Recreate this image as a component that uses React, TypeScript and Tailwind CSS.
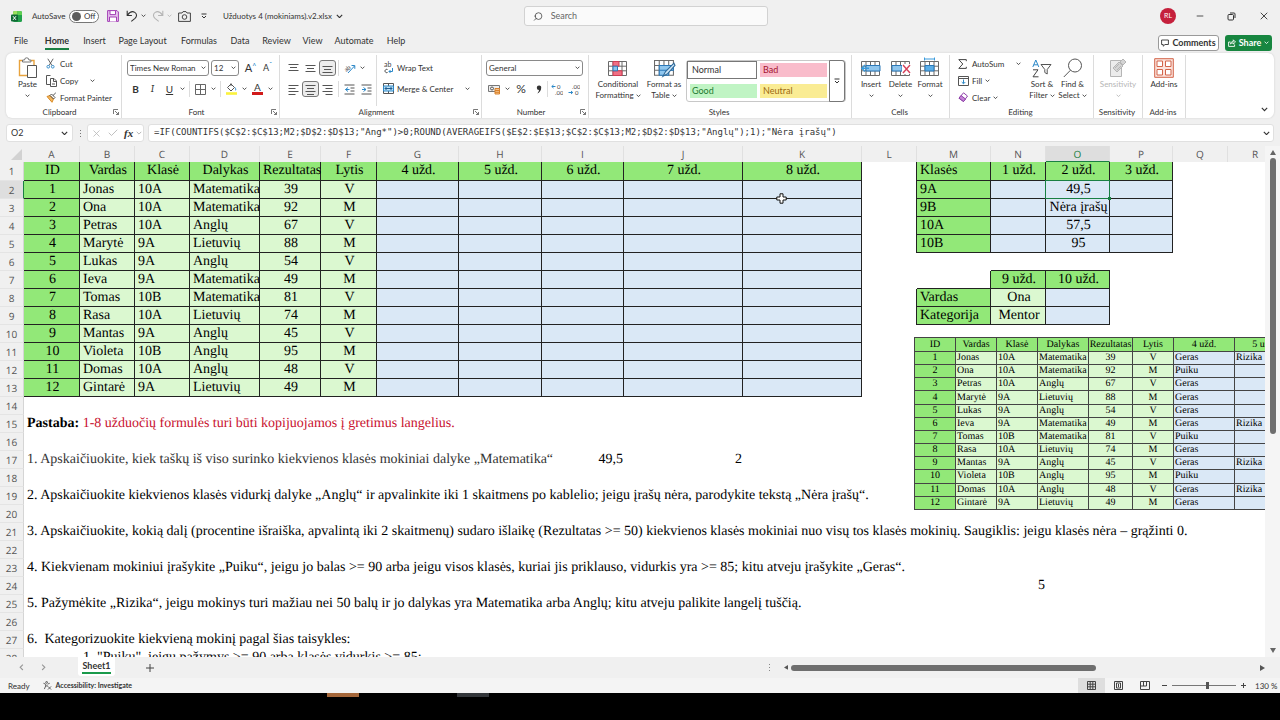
import React from "react";
import { Search, X, Minus, Check } from "lucide-react";

type Kind = "head" | "light" | "blue" | "plain";
type Cell = { text?: React.ReactNode; kind?: Kind; align?: string; edge?: string };

const columns = [
  { name: "A", width: "w-[56px]" },
  { name: "B", width: "w-[55px]" },
  { name: "C", width: "w-[55px]" },
  { name: "D", width: "w-[70px]" },
  { name: "E", width: "w-[61px]" },
  { name: "F", width: "w-[56px]" },
  { name: "G", width: "w-[82px]" },
  { name: "H", width: "w-[83px]" },
  { name: "I", width: "w-[82px]" },
  { name: "J", width: "w-[119px]" },
  { name: "K", width: "w-[119px]" },
  { name: "L", width: "w-[55px]" },
  { name: "M", width: "w-[74px]" },
  { name: "N", width: "w-[55px]" },
  { name: "O", width: "w-[64px]" },
  { name: "P", width: "w-[63px]" },
  { name: "Q", width: "w-[55px]" },
  { name: "R", width: "w-[55px]" },
];

const headers = ["ID", "Vardas", "Klasė", "Dalykas", "Rezultatas", "Lytis"];

const students = [
  ["1", "Jonas", "10A", "Matematika", "39", "V", "Geras", "Rizika"],
  ["2", "Ona", "10A", "Matematika", "92", "M", "Puiku", ""],
  ["3", "Petras", "10A", "Anglų", "67", "V", "Geras", ""],
  ["4", "Marytė", "9A", "Lietuvių", "88", "M", "Geras", ""],
  ["5", "Lukas", "9A", "Anglų", "54", "V", "Geras", ""],
  ["6", "Ieva", "9A", "Matematika", "49", "M", "Geras", "Rizika"],
  ["7", "Tomas", "10B", "Matematika", "81", "V", "Puiku", ""],
  ["8", "Rasa", "10A", "Lietuvių", "74", "M", "Geras", ""],
  ["9", "Mantas", "9A", "Anglų", "45", "V", "Geras", "Rizika"],
  ["10", "Violeta", "10B", "Anglų", "95", "M", "Puiku", ""],
  ["11", "Domas", "10A", "Anglų", "48", "V", "Geras", "Rizika"],
  ["12", "Gintarė", "9A", "Lietuvių", "49", "M", "Geras", ""],
];

const cells: Record<string, Cell> = {};

[...headers, "4 užd.", "5 užd.", "6 užd.", "7 užd.", "8 užd."].forEach((text, i) => {
  cells[columns[i].name + 1] = { text, kind: "head", align: "text-center" };
});
students.forEach((student, r) => {
  const row = r + 2;
  student.slice(0, 6).forEach((text, i) => {
    cells[columns[i].name + row] = {
      text,
      kind: i === 0 ? "head" : "light",
      align: i === 0 || i > 3 ? "text-center" : "text-left",
    };
  });
  "GHIJK".split("").forEach((c) => (cells[c + row] = { kind: "blue" }));
});

const summary = [
  ["Klasės", "1 užd.", "2 užd.", "3 užd."],
  ["9A", "", "49,5", ""],
  ["9B", "", "Nėra įrašų", ""],
  ["10A", "", "57,5", ""],
  ["10B", "", "95", ""],
];
summary.forEach((line, r) => {
  cells["L" + (r + 1)] = { edge: "border-r border-[#222]" };
  line.forEach((text, i) => {
    cells["MNOP"[i] + (r + 1)] = {
      text,
      kind: i === 0 || r === 0 ? "head" : "blue",
      align: i === 0 ? "text-left" : "text-center",
    };
  });
});

const notes: [string, React.ReactNode][] = [
  [
    "A15",
    <>
      <b>Pastaba:</b> <span className="text-[#c8102e]">1-8 užduočių formulės turi būti kopijuojamos į gretimus langelius.</span>
    </>,
  ],
  ["A17", <span className="text-[#333]">1. Apskaičiuokite, kiek taškų iš viso surinko kiekvienos klasės mokiniai dalyke „Matematika“</span>],
  ["A19", "2. Apskaičiuokite kiekvienos klasės vidurkį dalyke „Anglų“ ir apvalinkite iki 1 skaitmens po kablelio; jeigu įrašų nėra, parodykite tekstą „Nėra įrašų“."],
  ["A21", "3. Apskaičiuokite, kokią dalį (procentine išraiška, apvalintą iki 2 skaitmenų) sudaro išlaikę (Rezultatas >= 50) kiekvienos klasės mokiniai nuo visų tos klasės mokinių. Saugiklis: jeigu klasės nėra – grąžinti 0."],
  ["A23", "4. Kiekvienam mokiniui įrašykite „Puiku“, jeigu jo balas >= 90 arba jeigu visos klasės, kuriai jis priklauso, vidurkis yra >= 85; kitu atveju įrašykite „Geras“."],
  ["A25", "5. Pažymėkite „Rizika“, jeigu mokinys turi mažiau nei 50 balų ir jo dalykas yra Matematika arba Anglų; kitu atveju palikite langelį tuščią."],
  ["A27", <span className="whitespace-pre">{"6.  Kategorizuokite kiekvieną mokinį pagal šias taisykles:"}</span>],
  ["B28", '1. "Puiku", jeigu pažymys >= 90 arba klasės vidurkis >= 85;'],
];
notes.forEach(([key, text]) => (cells[key] = { text }));

Object.assign(cells, {
  M6: {},
  N6: { edge: "border-b border-[#222]" },
  O6: { edge: "border-b border-[#222]" },
  M7: { edge: "border-r border-b border-[#222]" },
  N7: { text: "9 užd.", kind: "head", align: "text-center" },
  O7: { text: "10 užd.", kind: "head", align: "text-center" },
  L8: { edge: "border-r border-[#222]" },
  M8: { text: "Vardas", kind: "head" },
  N8: { text: "Ona", kind: "light", align: "text-center" },
  O8: { kind: "blue" },
  L9: { edge: "border-r border-[#222]" },
  M9: { text: "Kategorija", kind: "head" },
  N9: { text: "Mentor", kind: "light", align: "text-center" },
  O9: { kind: "blue" },
  I17: { text: "49,5", align: "text-right" },
  J17: { text: "2", align: "text-right" },
  N24: { text: "5", align: "text-right" },
});

const fills: Record<Kind, string> = {
  head: "bg-[#92e878] border-r border-b border-[#222]",
  light: "bg-[#dbf8d0] border-r border-b border-[#222]",
  blue: "bg-[#dae8f6] border-r border-b border-[#222]",
  plain: "",
};

const Chevron = ({ className = "w-[5px]" }: { className?: string }) => (
  <svg viewBox="0 0 6 4" className={`shrink-0 ${className}`} fill="none" stroke="currentColor" strokeWidth="1">
    <path d="M.7.8 3 3.1 5.3.8" />
  </svg>
);

const Sep = ({ className = "" }: { className?: string }) => <span className={`w-px self-stretch bg-[#dcdcdc] ${className}`} />;

const Lines = ({ d }: { d: string }) => (
  <svg viewBox="0 0 11 11" className="w-[11px]" fill="none" stroke="#555">
    <path d={d} />
  </svg>
);

const UndoIcon = ({ className = "" }: { className?: string }) => (
  <svg viewBox="0 0 12 12" className={`w-[12px] ${className}`} fill="none" stroke="currentColor" strokeWidth="1.1">
    <path d="M1.200.8v4.700h4.700M1.500 5.200C3.500 2.300 6.500 1 8.800 2.400c2.600 1.800 1.900 4.400.2 5.900L5.300 11.400" />
  </svg>
);

const PasteIcon = () => (
  <svg viewBox="0 0 20 22" className="w-[20px]" fill="none">
    <path d="M4 3.5H1.5v15H9M13 3.5h3V8" stroke="#e8a33d" strokeWidth="1.4" />
    <path d="M4.5 5V3h2a2.2 2.2 0 0 1 4.400 0h2v2z" fill="#fff" stroke="#777" />
    <path d="M9.5 8.5h9v12h-9z" fill="#fff" stroke="#555" />
  </svg>
);

const CutIcon = () => (
  <svg viewBox="0 0 10 12" className="w-[9px]" fill="none">
    <path d="M2 .8 6.7 8.4M8 .8 3.3 8.4" stroke="#555" />
    <circle cx="2.5" cy="9.7" r="1.5" stroke="#2b88c8" />
    <circle cx="7.5" cy="9.7" r="1.5" stroke="#2b88c8" />
  </svg>
);

const CopyIcon = () => (
  <svg viewBox="0 0 11 12" className="w-[11px]" fill="#fff" stroke="#555">
    <path d="M6.5 9.5h-6v-9h4" />
    <path d="M4.5 3.5H8L10.500 6v5.500h-6z" />
    <path d="M7.500 3.500v3h3M6 9h3" fill="none" />
  </svg>
);

const BrushIcon = () => (
  <svg viewBox="0 0 11 11" className="w-[11px]" fill="none">
    <path d="M1 4.500 4 3.500 7.500 7 6 10.300z" fill="#f2b65e" stroke="#d98a26" />
    <path d="M4 3.500 5.500 2l3.500 3.500L7.500 7zM7 3.500 9.800.8" stroke="#555" />
  </svg>
);

const Grid = ({ className = "w-[20px]", children }: { className?: string; children?: React.ReactNode }) => (
  <svg viewBox="0 0 20 17" className={`overflow-visible ${className}`} fill="none">
    <path d="M.5 1.500h18v14H.5zM5 1.500v14M9.500 1.500v14M14 1.500v14M.5 6.200h18M.5 10.800h18" stroke="#6a6a6a" />
    {children}
  </svg>
);

type GroupProps = { label: string; width: string; launcher?: boolean; children: React.ReactNode };

const Group = ({ label, width, launcher, children }: GroupProps) => (
  <section aria-label={label} className={`flex shrink-0 flex-col pt-0.5 ${width}`}>
    <div className="flex flex-1 border-r border-[#dcdcdc]">{children}</div>
    <div className="flex h-3 items-center border-r border-[#dcdcdc] pr-0.5">
      <span className="flex-1 text-center">{label}</span>
      {launcher && (
        <button aria-label={`${label} settings`}>
          <svg viewBox="0 0 6 6" className="w-[6px]" fill="none" stroke="#555" strokeWidth=".8">
            <path d="M.5 5V.5H5M2 2l3.500 3.500M5.500 3v2.500H3" />
          </svg>
        </button>
      )}
    </div>
  </section>
);

type BigProps = { icon: React.ReactNode; lines: string[]; width: string; muted?: boolean; arrow?: boolean };

// large ribbon button: icon above one or two lines of text
const BigButton = ({ icon, lines, width, muted, arrow = true }: BigProps) => (
  <button className={`flex flex-col items-center pt-[2px] leading-[11px] whitespace-nowrap ${width} ${muted ? "text-[#b5b5b5]" : ""}`}>
    <span className="flex h-[22px] items-center">{icon}</span>
    <span>{lines[0]}</span>
    <span className="flex h-[11px] items-center gap-0.5">
      {lines[1]}
      {arrow && <Chevron />}
    </span>
  </button>
);

const SmallButton = ({ icon, label, children }: { icon: React.ReactNode; label: string; children?: React.ReactNode }) => (
  <button className="flex h-[17px] items-center whitespace-nowrap">
    <span className="flex w-[14px] shrink-0">{icon}</span>
    {label}
    {children}
  </button>
);

const Pick = ({ label, value, width }: { label: string; value: string; width: string }) => (
  <span className={`relative ${width}`}>
    <select aria-label={label} className="h-4 w-full appearance-none rounded-[3px] border border-[#8a8a8a] bg-white pl-[2px]">
      <option>{value}</option>
    </select>
    <Chevron className="pointer-events-none absolute top-1.5 right-[3px] w-[5px]" />
  </span>
);

const tool = "flex h-4 w-[17px] shrink-0 items-center justify-center";
const pressed = "rounded-[3px] border border-[#777] bg-[#ececec]";
const drop = "flex w-[9px] shrink-0 items-center justify-center";

const tabs = [
  { name: "File", width: "w-[30px]" },
  { name: "Home", width: "w-[42px]" },
  { name: "Insert", width: "w-[33px]" },
  { name: "Page Layout", width: "w-[63px]" },
  { name: "Formulas", width: "w-[50px]" },
  { name: "Data", width: "w-[32px]" },
  { name: "Review", width: "w-[41px]" },
  { name: "View", width: "w-[31px]" },
  { name: "Automate", width: "w-[52px]" },
  { name: "Help", width: "w-[32px]" },
];

const TitleBar = () => (
  <header className="flex h-8 items-center pl-[11px] whitespace-nowrap">
    <div className="flex flex-1 items-center">
      <svg viewBox="0 0 11 11" className="w-[11px]">
        <rect x="2" width="9" height="11" rx="1.5" fill="#21a14b" />
        <path d="M2 1.500A1.500 1.500 0 0 1 3.500 0H6.500v4H2z" fill="#9be05e" />
        <path d="M6.500 0h3A1.500 1.500 0 0 1 11 1.500V4H6.500z" fill="#5fcf52" />
        <rect y="3.500" width="7" height="7" rx="1" fill="#0f6a35" />
        <path d="m2 5.200 3 3.700M5 5.200 2 8.900" stroke="#fff" />
      </svg>
      <label htmlFor="autosave" className="ml-[10px] w-[33px]">AutoSave</label>
      <span className="relative ml-1 flex h-[13px] w-[30px] items-center rounded-full border border-[#777] bg-white">
        <input id="autosave" type="checkbox" className="absolute inset-0 appearance-none" />
        <span className="ml-[2px] size-[9px] rounded-full bg-[#5c5c5c]" />
        <span className="ml-[3px]">Off</span>
      </span>
      <button aria-label="Save" className="ml-2">
        <svg viewBox="0 0 12 12" className="w-[12px]" fill="#e6c3ee" stroke="#a33fb5">
          <path d="M.6.6h9.400l1.400 1.400v9.400H.6z" />
          <path d="M3 .6h5.500v4H3zM2.500 11.400V7h7v4.400" fill="#fff" />
        </svg>
      </button>
      <button aria-label="Undo" className="ml-[7px]"><UndoIcon /></button>
      <button aria-label="Undo list" className="ml-[3px]"><Chevron /></button>
      <button aria-label="Redo" className="ml-[6px] text-[#b5b5b5]"><UndoIcon className="-scale-x-100" /></button>
      <button aria-label="Redo list" className="ml-[3px] text-[#b5b5b5]"><Chevron /></button>
      <button aria-label="Camera" className="ml-[6px]">
        <svg viewBox="0 0 13 11" className="w-[13px]" fill="none" stroke="#444">
          <path d="M4 2 5 .6h3L9 2h3.400v8.400H.6V2z" />
          <circle cx="6.500" cy="6" r="2.300" />
        </svg>
      </button>
      <button aria-label="Customize toolbar" className="ml-[10px]">
        <svg viewBox="0 0 6 6" className="w-[6px]" fill="none" stroke="currentColor"><path d="M.5 1h5M1 3l2 2 2-2" /></svg>
      </button>
      <button className="ml-[16px] flex items-center gap-1">
        Užduotys 4 (mokiniams).v2.xlsx <Chevron className="w-[7px]" />
      </button>
    </div>
    <label className="flex h-5 w-[244px] items-center gap-2 rounded-[3px] border border-[#d2d2d2] bg-[#fafafa] px-2 text-[9px]">
      <Search size={11} strokeWidth={1.7} className="-scale-x-100" />
      <input aria-label="Search" placeholder="Search" className="w-full outline-none placeholder:text-[#666]" />
    </label>
    <div className="flex flex-1 items-center justify-end">
      <span className="mr-[19px] flex size-4 items-center justify-center rounded-full bg-[#c5203c] text-[7px] text-white">RL</span>
      <button aria-label="Minimize" className="mr-[22px]"><Minus size={10} strokeWidth={2} /></button>
      <button aria-label="Restore" className="mr-[22px]">
        <svg viewBox="0 0 9 9" className="w-[9px]" fill="none" stroke="#333"><rect x="1" y="2.500" width="5.500" height="5.500" rx="1" /><path d="M3 1h4a1 1 0 0 1 1 1v4" /></svg>
      </button>
      <button aria-label="Close" className="mr-[10px]"><X size={12} strokeWidth={1.800} /></button>
    </div>
  </header>
);

const TabBar = () => (
  <nav className="flex h-[21px] items-center pr-2 pl-[6px] text-[9px]">
    {tabs.map((tab) => (
      <button key={tab.name} className={`flex h-full justify-center pt-0.5 whitespace-nowrap ${tab.width}`}>
        <span className={tab.name === "Home" ? "h-4 border-b-2 border-[#1a7f43] font-bold" : "h-4"}>{tab.name}</span>
      </button>
    ))}
    <button className="ml-auto flex h-4 w-[61px] items-center justify-center gap-[3px] rounded-[3px] border border-[#9a9a9a] bg-white font-bold">
      <svg viewBox="0 0 8 8" className="w-[8px]" fill="none" stroke="#333" strokeWidth=".9"><path d="M.6 1h6.800v4.500H4L2.200 7.200V5.500H.6z" /></svg>
      Comments
    </button>
    <button className="ml-[6px] flex h-4 w-[47px] items-center justify-center gap-[3px] rounded-[3px] bg-[#178640] font-bold text-white">
      <svg viewBox="0 0 8 8" className="w-[8px]" fill="none" stroke="#fff" strokeWidth=".9"><path d="M2.500 3H.6v4.400h6V5.500M2.500 5c.2-1.700 1.200-2.500 2.800-2.500V.8L7.500 3 5.300 5V3.800C4 3.800 3.200 4.200 2.500 5z" /></svg>
      Share <Chevron />
    </button>
  </nav>
);

const Ribbon = () => (
  <div className="mx-[6px] flex h-[65px] rounded-md bg-white shadow-[0_0_2px_#c8c8c8]">
    <Group label="Clipboard" width="w-[116px]" launcher>
      <BigButton icon={<PasteIcon />} lines={["Paste"]} width="w-[40px] pl-[3px]" />
      <div className="flex flex-col">
        <SmallButton icon={<CutIcon />} label="Cut" />
        <SmallButton icon={<CopyIcon />} label="Copy"><Chevron className="ml-[12px] w-[5px]" /></SmallButton>
        <SmallButton icon={<BrushIcon />} label="Format Painter" />
      </div>
    </Group>
    <Group label="Font" width="w-[158px]" launcher>
      <div className="flex flex-col gap-[5px] pt-[5px] pl-[5px]">
        <div className="flex items-center">
          <Pick label="Font name" value="Times New Roman" width="w-[82px]" />
          <Pick label="Font size" value="12" width="ml-[2px] w-[28px]" />
          <button className="ml-[3px] w-[17px] text-[11px] leading-4">A<sup className="text-[7px] text-[#2b88c8]">^</sup></button>
          <button className="w-[17px] text-[9px] leading-4">A<sup className="text-[7px] text-[#2b88c8]">ˇ</sup></button>
        </div>
        <div className="flex h-4 items-center text-[10px]">
          <button className={`${tool} font-bold`}>B</button>
          <button className={`${tool} font-serif italic`}>I</button>
          <button className={`${tool} underline`}>U</button>
          <button aria-label="Underline style" className={drop}><Chevron /></button>
          <Sep className="mx-[2px]" />
          <button aria-label="Borders" className={tool}>
            <svg viewBox="0 0 11 11" className="w-[11px]" fill="none" stroke="#666"><path d="M.5.5h10v10H.5zM5.500.5v10M.5 5.500h10" /></svg>
          </button>
          <button aria-label="Border style" className={drop}><Chevron /></button>
          <Sep className="mx-[2px]" />
          <button aria-label="Fill color" className={tool}>
            <svg viewBox="0 0 11 12" className="w-[11px]" fill="none">
              <path d="m5 1 3.500 3.500L5 8 1.500 4.500zM5 3V.3" stroke="#555" />
              <path d="M9 4.500c1 1.500 1 2.500 0 3" stroke="#2b88c8" />
              <path d="M0 9.200h11v2.600H0z" fill="#fbf23c" />
            </svg>
          </button>
          <button aria-label="Fill colors" className={drop}><Chevron /></button>
          <button aria-label="Font color" className={tool}>
            <span className="flex flex-col items-center leading-[9px]">A<span className="h-[3px] w-[11px] bg-[#d11a1a]" /></span>
          </button>
          <button aria-label="Font colors" className={drop}><Chevron /></button>
        </div>
      </div>
    </Group>
    <Group label="Alignment" width="w-[202px]" launcher>
      <div className="flex flex-col gap-[5px] pt-[5px] pl-[5px]">
        <div className="flex items-center">
          <button aria-label="Top align" className={tool}><Lines d="M.5 1.500h10M2 4.500h7M.5 7.500h10" /></button>
          <button aria-label="Middle align" className={tool}><Lines d="M.5 2.500h10M2 5.500h7M.5 8.500h10" /></button>
          <button aria-label="Bottom align" className={`${tool} ${pressed}`}><Lines d="M.5 3.500h10M2 6.500h7M.5 9.500h10" /></button>
          <Sep className="mx-[2px]" />
          <button aria-label="Orientation" className={tool}>
            <svg viewBox="0 0 12 12" className="w-[12px] overflow-visible" fill="none">
              <text x="0" y="8" fontSize="6" fill="#444" transform="rotate(-40 4 6)">ab</text>
              <path d="m4 11 6.500-7M7.500 3.500h3.300v3.300" stroke="#2b88c8" />
            </svg>
          </button>
          <button aria-label="Orientations" className={drop}><Chevron /></button>
        </div>
        <div className="flex items-center">
          <button aria-label="Align left" className={tool}><Lines d="M.5 1.500h10M.5 4.500h7M.5 7.500h10M.5 10.500h7" /></button>
          <button aria-label="Center" className={`${tool} ${pressed}`}><Lines d="M.5 1.500h10M2 4.500h7M.5 7.500h10M2 10.500h7" /></button>
          <button aria-label="Align right" className={tool}><Lines d="M.5 1.500h10M3.500 4.500h7M.5 7.500h10M3.500 10.500h7" /></button>
          <Sep className="mx-[2px]" />
          {["M4 3.500 1.500 5.500 4 7.500M1.500 5.500h4", "M2.500 3.500 5 5.500 2.500 7.500M5 5.500H1"].map((d, i) => (
            <button key={d} aria-label={i ? "Increase indent" : "Decrease indent"} className={tool}>
              <svg viewBox="0 0 11 11" className="w-[11px]" fill="none">
                <path d="M.5 1h10M6.500 4h4M6.500 7h4M.5 10h10" stroke="#555" />
                <path d={d} stroke="#2b88c8" />
              </svg>
            </button>
          ))}
        </div>
      </div>
      <Sep className="mr-[6px] ml-px" />
      <div className="flex flex-col gap-1 pt-1">
        <SmallButton
          label="Wrap Text"
          icon={
            <svg viewBox="0 0 11 12" className="w-[11px] overflow-visible" fill="none">
              <text x="1" y="5" fontSize="7" fill="#444">ab</text>
              <path d="M4.500 7.500a1.700 1.700 0 1 0 0 3" stroke="#444" />
              <path d="M9.500 6v3.500H6M7.500 8 6 9.500 7.500 11" stroke="#2b88c8" />
            </svg>
          }
        />
        <SmallButton
          label="Merge & Center"
          icon={
            <svg viewBox="0 0 11 11" className="w-[11px]" fill="none">
              <path d="M.5.5h10v10H.5zM5.500.5V3M5.500 8v2.500" stroke="#555" />
              <path d="M.5 3h10v5H.5z" fill="#bfe0f5" stroke="#2b88c8" />
              <path d="M2 5.500h7M3.500 4 2 5.500 3.500 7M7.500 4 9 5.500 7.500 7" stroke="#205f93" />
            </svg>
          }
        >
          <Chevron className="ml-[12px] w-[5px]" />
        </SmallButton>
      </div>
    </Group>
    <Group label="Number" width="w-[107px]" launcher>
      <div className="flex flex-col gap-[5px] pt-[5px] pl-[4px]">
        <Pick label="Number format" value="General" width="flex w-[97px]" />
        <div className="flex items-center">
          <button aria-label="Accounting format" className={tool}>
            <svg viewBox="0 0 13 11" className="w-[13px]" fill="none">
              <path d="M.5 1.500h11v6H.5z" stroke="#777" fill="#eee" />
              <circle cx="4" cy="4.500" r="1.500" stroke="#555" />
              <path d="M7 4.500h4.500v5.500H7zM7 6.500h4.500M7 8.300h4.500" fill="#f6c48c" stroke="#d9812b" />
            </svg>
          </button>
          <button aria-label="Currencies" className={drop}><Chevron /></button>
          <button className="w-[18px] text-[12px] leading-4">%</button>
          <button aria-label="Comma style" className={tool}>
            <svg viewBox="0 0 6 9" className="w-[6px]" fill="#333"><path d="M3 .5a2 2 0 0 1 2.200 2.300C5.200 5.500 3.500 7.800 1.200 8.500c1-1.200 1.700-2.300 1.800-3.600A2.200 2.200 0 0 1 3 .5z" /></svg>
          </button>
          <Sep />
          {["M4.500 2.500H.8M2.500 1 .8 2.500 2.500 4", "M.5 8.500h4M3 7l1.700 1.500L3 10"].map((d, i) => (
            <button key={d} aria-label={i ? "Decrease decimal" : "Increase decimal"} className={tool}>
              <svg viewBox="0 0 12 11" className="w-[12px]" fill="none">
                <text x={i ? 4 : 6} y="5" fontSize="6" fill="#444">{i ? ".00" : "0"}</text>
                <text x={i ? 7 : 4} y="11" fontSize="6" fill="#444">{i ? "0" : ".00"}</text>
                <path d={d} stroke="#2b88c8" />
              </svg>
            </button>
          ))}
        </div>
      </div>
    </Group>
    <Group label="Styles" width="w-[263px]">
      <BigButton
        width="ml-[2px] w-[54px]"
        lines={["Conditional", "Formatting"]}
        icon={
          <Grid>
            <path d="M5 1.500h6v4.700H5zM5 10.800h9v4.700H5z" fill="#f07084" stroke="#cf3d55" />
            <path d="M5 6.200h4.500v4.600H5z" fill="#8fc6ee" stroke="#2b78b8" />
          </Grid>
        }
      />
      <BigButton
        width="w-[38px]"
        lines={["Format as", "Table"]}
        icon={
          <Grid className="w-[21px]">
            <path d="M5 6.200h13.500v4.600H5zM5 10.800h9v4.700H5z" fill="#8fc6ee" stroke="#2b78b8" />
            <path d="m19 4-8 8-2.500 4.500 4.500-2.500 7-8z" fill="#cfe6f7" stroke="#2b6797" />
          </Grid>
        }
      />
      <div className="mt-[5px] ml-[3px] flex h-[42px] rounded-[3px] border border-[#c8c8c8] text-[9px] leading-[14px]">
        <div className="grid grid-cols-[70px_67px] content-between gap-x-[3px] pr-[2px] pb-[3px] text-left">
          <button className="h-[18px] border border-[#777] pl-1 text-left">Normal</button>
          <button className="mt-[2px] h-[14px] bg-[#f9bccb] pl-[3px] text-left text-[#a3142f]">Bad</button>
          <button className="ml-[3px] h-[14px] bg-[#c0f4c4] pl-[2px] text-left text-[#1c7a30]">Good</button>
          <button className="h-[14px] bg-[#faec94] pl-[3px] text-left text-[#9c6a12]">Neutral</button>
        </div>
        <button aria-label="More styles" className="-my-px flex w-4 items-center justify-center rounded-r-[3px] border border-[#777]">
          <svg viewBox="0 0 6 6" className="w-[6px]" fill="none" stroke="currentColor"><path d="M.5 1h5M1 3l2 2 2-2" /></svg>
        </button>
      </div>
    </Group>
    <Group label="Cells" width="w-[98px]">
      <BigButton
        width="ml-[4px] w-[30px]"
        lines={["Insert"]}
        icon={<Grid><path d="M5 5.500h14v5.500H5z" fill="#8fc6ee" stroke="#2b78b8" /><path d="M8 8.200H.8M4 5 .8 8.200 4 11.500" stroke="#3a9bdc" strokeWidth="1.400" /></Grid>}
      />
      <BigButton
        width="w-[29px]"
        lines={["Delete"]}
        icon={<Grid><path d="M1 5.500h10v5.500H1z" fill="#8fc6ee" stroke="#2b78b8" /><path d="M11 4h9v10h-9z" fill="#fff" /><path d="m12 5 7 8M19 5l-7 8" stroke="#d6405a" strokeWidth="1.400" /></Grid>}
      />
      <BigButton
        width="w-[30px]"
        lines={["Format"]}
        icon={<Grid><path d="M5 5.500h9v5.500H5z" fill="#5aaee8" stroke="#2b78b8" /><path d="M4.500-1h10M4.500-2.500v3M14.500-2.500v3" stroke="#3a9bdc" /></Grid>}
      />
    </Group>
    <Group label="Editing" width="w-[144px]">
      <div className="flex w-[73px] flex-col pl-[8px]">
        <SmallButton label="AutoSum" icon={<svg viewBox="0 0 9 10" className="w-[9px]" fill="none" stroke="#444"><path d="M8.300 2.200V.6H.8l4 4.400-4 4.400h7.500V7.800" /></svg>}>
          <Chevron className="ml-[12px] w-[5px]" />
        </SmallButton>
        <SmallButton label="Fill" icon={<svg viewBox="0 0 11 10" className="w-[11px]" fill="none"><path d="M.5.500h10v9H.5zM.5 2.500h10" stroke="#555" /><path d="M5.500 3.500v4M3.700 6l1.800 1.800L7.300 6" stroke="#2b88c8" /></svg>}>
          <Chevron className="ml-[3px] w-[5px]" />
        </SmallButton>
        <SmallButton label="Clear" icon={<svg viewBox="0 0 11 11" className="w-[11px]"><path d="M5.500.8 9.500 4 5.500 9.500 1 6.200z" fill="#fff" stroke="#8e3fa8" /><path d="M3 3.500 7.500 7l-2 2.500L1 6.200z" fill="#c585d8" stroke="#8e3fa8" /></svg>}>
          <Chevron className="ml-[3px] w-[5px]" />
        </SmallButton>
      </div>
      <BigButton
        width="ml-[4px] w-[30px]"
        lines={["Sort &", "Filter"]}
        icon={
          <svg viewBox="0 0 20 19" className="w-[20px]" fill="none">
            <path d="m.8 8 3-7 3 7M1.800 5.800h4" stroke="#2b88c8" />
            <path d="M1 10.800h5L1 17.800h5.500" stroke="#444" />
            <path d="M9 5.500h10l-3.800 5V15l-2.400-1.500v-3z" stroke="#555" />
          </svg>
        }
      />
      <BigButton
        width="w-[31px]"
        lines={["Find &", "Select"]}
        icon={<svg viewBox="0 0 20 20" className="w-[20px]" fill="none" stroke="#555"><circle cx="12" cy="7.500" r="6.500" /><path d="M7.500 12.200.8 19" /></svg>}
      />
    </Group>
    <Group label="Sensitivity" width="w-[49px]">
      <BigButton
        width="w-[48px]"
        muted
        lines={["Sensitivity"]}
        icon={
          <svg viewBox="0 0 19 20" className="w-[19px]" fill="#ececec" stroke="#b5b5b5">
            <path d="M1.500 2.500h11v16h-11z" />
            <path d="m4 10 6-6 4 4-6 6zM11 4l3-3 3 3-3 3z" fill="#d4d4d4" />
            <path d="m6 10 4-4M8 12l4-4" />
          </svg>
        }
      />
    </Group>
    <Group label="Add-ins" width="w-[43px]">
      <BigButton
        width="w-[42px]"
        arrow={false}
        lines={["Add-ins"]}
        icon={
          <svg viewBox="0 0 20 20" className="w-[20px]" fill="#fbe3dc" stroke="#d2644a">
            <path d="M.7.7h18.600v18.600H.7z" />
            <path d="M3 3h5.500v5.500H3zM11.500 3H17v5.500h-5.500zM3 11.500h5.500V17H3zM11.500 11.500H17V17h-5.500z" fill="#fff" />
          </svg>
        }
      />
    </Group>
    <button aria-label="Collapse ribbon" className="mt-auto mr-[6px] mb-[6px] ml-auto"><Chevron className="w-[7px]" /></button>
  </div>
);

const FormulaBar = () => (
  <div className="mx-[6px] mt-[6px] mb-1 flex h-[18px] items-stretch">
    <label className="flex w-[67px] items-center rounded-[3px] border border-[#e0e0e0] bg-white pr-1">
      <input aria-label="Name box" defaultValue="O2" className="w-full pl-1 text-[9px] outline-none" />
      <Chevron className="w-[7px]" />
    </label>
    <span className="flex w-[14px] flex-col items-center justify-center gap-[2px]">
      {[0, 1, 2].map((dot) => <i key={dot} className="size-px bg-[#777]" />)}
    </span>
    <div className="flex w-[57px] items-center rounded-[3px] border border-[#e0e0e0] bg-white pl-[3px] text-[#b5b5b5]">
      <button aria-label="Cancel"><X size={11} strokeWidth={1.700} /></button>
      <button aria-label="Enter" className="ml-[5px]"><Check size={12} strokeWidth={1.700} /></button>
      <button className="ml-[5px] font-['Liberation_Serif',serif] text-[11px] leading-4 font-bold text-[#333] italic">fx</button>
      <button aria-label="Functions" className="ml-[3px]"><Chevron className="w-[6px]" /></button>
    </div>
    <label className="ml-[4px] flex flex-1 items-center rounded-[3px] border border-[#e0e0e0] bg-white px-[5px]">
      <input
        aria-label="Formula"
        className="w-full font-['DejaVu_Sans_Mono',monospace] text-[9px] outline-none"
        defaultValue={'=IF(COUNTIFS($C$2:$C$13;M2;$D$2:$D$13;"Ang*")>0;ROUND(AVERAGEIFS($E$2:$E$13;$C$2:$C$13;M2;$D$2:$D$13;"Anglų");1);"Nėra įrašų")'}
      />
      <Chevron className="-mr-[2px] w-[7px]" />
    </label>
  </div>
);

// smaller copy of the first table pasted over the sheet
const PastedTable = () => (
  <table className="absolute top-[191px] left-[914px] h-[173px] w-[380px] table-fixed border-collapse text-[10px] leading-[10px]">
    <colgroup>
      {["w-[41px]", "w-[41px]", "w-[41px]", "w-[51px]", "w-[44px]", "w-[41px]", "w-[61px]", "w-[60px]"].map((w, i) => (
        <col key={i} className={w} />
      ))}
    </colgroup>
    <thead>
      <tr className="h-[14px]">
        {[...headers, "4 užd.", "5 užd."].map((text) => (
          <th key={text} className="border border-[#444] bg-[#92e878] p-0 font-normal">{text}</th>
        ))}
      </tr>
    </thead>
    <tbody>
      {students.map((student) => (
        <tr key={student[0]} className="h-[13px]">
          {student.map((text, i) => (
            <td
              key={i}
              className={`border border-[#444] p-0 whitespace-nowrap ${i === 0 ? "bg-[#92e878]" : i > 5 ? "bg-[#dae8f6]" : "bg-[#dbf8d0]"} ${
                [0, 4, 5].includes(i) ? "text-center" : "pl-px text-left"
              }`}
            >
              {text}
            </td>
          ))}
        </tr>
      ))}
    </tbody>
  </table>
);

const Sheet = () => (
  <main className="flex min-h-0 flex-1">
    <div className="relative min-w-0 flex-1 overflow-hidden bg-white font-['Liberation_Serif',serif] text-black">
      <table className="w-[1283px] table-fixed border-separate border-spacing-0 text-[14px] leading-4 whitespace-nowrap">
        <colgroup>
          <col className="w-[24px]" />
          {columns.map((col) => <col key={col.name} className={col.width} />)}
        </colgroup>
        <thead className="font-['Open_Sans',sans-serif] text-[10px] leading-[14px] text-[#555]">
          <tr className="h-4 bg-[#f0f0f0]">
            <th className="p-0">
              <svg viewBox="0 0 24 16" className="block w-[24px]"><path d="M22 3v11H11z" fill="#d2d2d2" /></svg>
            </th>
            {columns.map((col) => (
              <th
                key={col.name}
                className={`h-4 border-r border-[#e0e0e0] p-0 font-normal ${col.name === "O" ? "border-b border-b-[#1a7f43] bg-[#dedede] text-[#1a7f43]" : ""}`}
              >
                {col.name}
              </th>
            ))}
          </tr>
        </thead>
        <tbody>
          {Array.from({ length: 28 }, (_, i) => i + 1).map((row) => (
            <tr key={row} className={row === 1 ? "h-[19px]" : "h-[18px]"}>
              <th
                className={`border-r border-b border-b-[#e4e4e4] p-0 text-center font-['Open_Sans',sans-serif] text-[10px] font-normal text-[#555] ${
                  row === 2 ? "border-r-[#1a7f43] bg-[#dedede]" : "border-r-[#d5d5d5] bg-[#f0f0f0]"
                }`}
              >
                {row}
              </th>
              {columns.map((col) => {
                const cell = cells[col.name + row] || {};
                return (
                  <td key={col.name} className={`py-0 pr-px pl-[3px] ${fills[cell.kind || "plain"]} ${cell.align || "text-left"} ${cell.edge || ""}`}>
                    {cell.text}
                  </td>
                );
              })}
            </tr>
          ))}
        </tbody>
      </table>
      <div className="absolute top-[34px] left-[1045px] h-[19px] w-[65px] border border-[#1a7f43]">
        <span className="absolute -right-[2px] -bottom-[2px] size-[3px] bg-[#1a7f43]" />
      </div>
      <PastedTable />
      <svg viewBox="0 0 11 11" className="absolute top-[47px] left-[776px] w-[11px]" fill="#fff" stroke="#111">
        <path d="M4 .8h3V4h3.200v3H7v3.200H4V7H.8V4H4z" />
      </svg>
    </div>
    <div className="flex w-[15px] flex-col items-center bg-[#f5f5f5] py-1">
      <svg viewBox="0 0 6 5" className="w-[6px]" fill="#666"><path d="M3 0 6 5H0z" /></svg>
      <span className="mt-[3px] h-[276px] w-[6px] rounded-full bg-[#6e6e6e]" />
      <svg viewBox="0 0 6 5" className="mt-auto w-[6px]" fill="#666"><path d="M3 5 6 0H0z" /></svg>
    </div>
  </main>
);

const SheetTabs = () => (
  <div className="flex h-[21px] items-center bg-[#f0f0f0]">
    <button aria-label="Previous sheet" className="ml-[18px] text-[#999]"><Chevron className="w-[7px] rotate-90" /></button>
    <button aria-label="Next sheet" className="ml-[15px] text-[#999]"><Chevron className="w-[7px] -rotate-90" /></button>
    <button className="ml-[31px] flex w-[37px] justify-center self-start rounded-b-[3px] bg-white pt-[3px] pb-[2px] text-[9px] leading-[12px] font-bold">
      <span className="border-b-2 border-[#1a9a4b]">Sheet1</span>
    </button>
    <button aria-label="New sheet" className="ml-[31px]">
      <svg viewBox="0 0 8 8" className="w-[8px]" stroke="#444"><path d="M4 0v8M0 4h8" /></svg>
    </button>
    <span className="ml-auto flex flex-col gap-[2px]">
      {[0, 1, 2].map((dot) => <i key={dot} className="size-px bg-[#888]" />)}
    </span>
    <div className="ml-[14px] flex w-[496px] items-center gap-[3px] pr-[15px]">
      <svg viewBox="0 0 5 6" className="w-[4px]" fill="#555"><path d="M0 3 5 0v6z" /></svg>
      <span className="h-[6px] w-[305px] rounded-full bg-[#6e6e6e]" />
      <svg viewBox="0 0 5 6" className="ml-auto w-[5px]" fill="#555"><path d="M5 3 0 0v6z" /></svg>
    </div>
  </div>
);

const StatusBar = () => (
  <footer className="flex h-[15px] items-center bg-[#f4f4f4] pr-[5px] pl-2">
    <span>Ready</span>
    <button className="ml-[13px] flex items-center gap-1 text-[7px] font-bold">
      <svg viewBox="0 0 10 10" className="w-[9px]" fill="none" stroke="#444" strokeWidth=".9">
        <circle cx="4" cy="1.500" r="1" />
        <path d="M.5 2.500 3 3.500v2L1.500 9M7.500 2.500 5 3.500M3 5.500h2.500M5.500 6l3.500 3.500M9 6 5.500 9.500" />
      </svg>
      Accessibility: Investigate
    </button>
    <button aria-label="Normal view" className="ml-auto flex h-full w-[27px] items-center justify-center bg-[#dedede]">
      <svg viewBox="0 0 9 9" className="w-[9px]" fill="none" stroke="#444"><path d="M.5.5h8v8h-8zM3.200.5v8M5.800.5v8M.5 3.200h8M.5 5.800h8" /></svg>
    </button>
    <button aria-label="Page layout view" className="flex w-[27px] justify-center">
      <svg viewBox="0 0 9 9" className="w-[9px]" fill="none" stroke="#444"><path d="M.5.5h8v8h-8zM2.500 2v5h4V2zM4.500 3v3" /></svg>
    </button>
    <button aria-label="Page break view" className="flex w-[26px] justify-center">
      <svg viewBox="0 0 10 9" className="w-[10px]" fill="none" stroke="#444"><path d="M.5.5h9v8h-9zM.5 5h6V.5M3.500.5V5" /></svg>
    </button>
    <button aria-label="Zoom out" className="ml-[4px]"><svg viewBox="0 0 5 5" className="w-[5px]" stroke="#444"><path d="M0 2.500h5" /></svg></button>
    <input
      type="range"
      aria-label="Zoom"
      min="0"
      max="100"
      defaultValue="56"
      className="mx-[5px] h-px w-[64px] appearance-none bg-[#777] [&::-webkit-slider-thumb]:h-[7px] [&::-webkit-slider-thumb]:w-[3px] [&::-webkit-slider-thumb]:appearance-none [&::-webkit-slider-thumb]:bg-[#555]"
    />
    <button aria-label="Zoom in"><svg viewBox="0 0 5 5" className="w-[5px]" stroke="#444"><path d="M0 2.500h5M2.500 0v5" /></svg></button>
    <span className="ml-[9px] w-5 text-right whitespace-nowrap">130 %</span>
  </footer>
);

const App = () => {
  return (
    <div className="flex h-screen w-full flex-col overflow-hidden bg-[#f0f0f0] font-['Lato',sans-serif] text-[8px] text-[#333] [text-rendering:geometricPrecision]">
      <TitleBar />
      <TabBar />
      <Ribbon />
      <FormulaBar />
      <Sheet />
      <SheetTabs />
      <StatusBar />
      <div className="flex h-[27px] bg-black">
        <span className="ml-[327px] h-1 w-8 bg-[#a5673a]" />
        <span className="ml-[98px] h-1 w-8 bg-[#33363a]" />
      </div>
    </div>
  );
};

export default App;
